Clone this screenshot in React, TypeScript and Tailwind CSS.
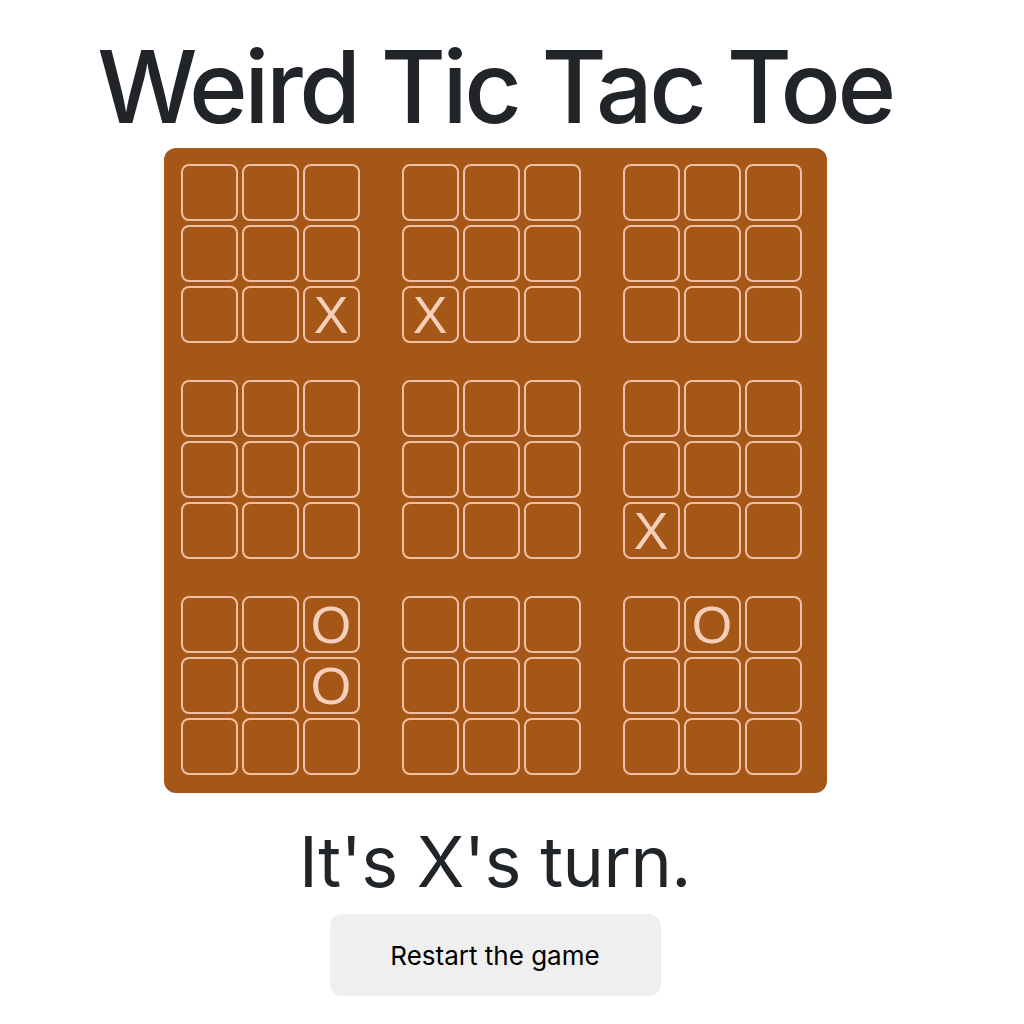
import React from "react";

const boards: string[][] = [
  ["", "", "", "", "", "", "", "", "X"],
  ["", "", "", "", "", "", "X", "", ""],
  ["", "", "", "", "", "", "", "", ""],
  ["", "", "", "", "", "", "", "", ""],
  ["", "", "", "", "", "", "", "", ""],
  ["", "", "", "", "", "", "X", "", ""],
  ["", "", "O", "", "", "O", "", "", ""],
  ["", "", "", "", "", "", "", "", ""],
  ["", "O", "", "", "", "", "", "", ""],
];

export default function App() {
  return (
    <div className="w-[990px] flex flex-col items-center bg-white" style={{ fontFamily: "Inter, 'Noto Sans', sans-serif" }}>
      <h1 className="mt-[27px] text-[100px] leading-[120px] font-medium text-[#212529] tracking-[-3.5px]">Weird Tic Tac Toe</h1>
      <div className="mt-[1px] rounded-[12px] bg-[#a45716] pl-[17px] pr-[25px] pt-[16px] pb-[18px] grid grid-cols-3 gap-x-[42px] gap-y-[37px]">
        {boards.map((b, bi) => (
          <div key={bi} className="grid grid-cols-3 gap-[4px]">
            {b.map((c, ci) => (
              <div
                key={ci}
                className="w-[57px] h-[57px] rounded-[8px] border-2 border-[#eebfa6] flex items-center justify-center text-[#f6cfbc] text-[52px] leading-none"
                style={{ fontFamily: "'Liberation Sans', Arial, sans-serif" }}
              >
                {c}
              </div>
            ))}
          </div>
        ))}
      </div>
      <div className="mt-[26px] text-[70px] leading-[86px] text-[#212529] tracking-[-0.5px]">It's X's turn.</div>
      <button className="mt-[9px] w-[331px] h-[82px] rounded-[12px] bg-[#efefef] text-[26px] text-black">
        Restart the game
      </button>
    </div>
  );
}
